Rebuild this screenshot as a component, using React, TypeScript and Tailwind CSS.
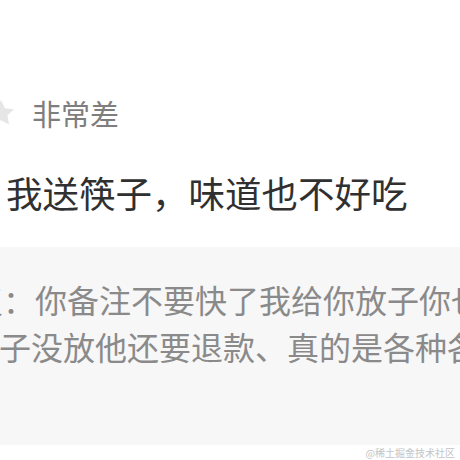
const cjk = { fontFamily: '"Noto Sans CJK SC", "Noto Sans", sans-serif' };

function Star() {
  return (
    <svg width="32" height="32" viewBox="0 0 24 24" className="shrink-0">
      <path
        d="M12 2.2l2.95 6.2 6.8.85-4.98 4.7 1.25 6.75L12 17.4l-6.02 3.3 1.25-6.75-4.98-4.7 6.8-.85z"
        fill="#e6e6e6"
      />
    </svg>
  );
}

export default function App() {
  return (
    <div className="relative h-[460px] w-[460px] overflow-hidden bg-white" style={cjk}>
      <div className="pt-[97px]">
        <div className="flex items-center">
          <div className="-ml-[15px] w-[32px]">
            <Star />
          </div>
          <span className="ml-[15px] text-[29px] leading-[29px] text-[#7e7e7e]">非常差</span>
        </div>

        <p className="mt-[46px] ml-[6px] whitespace-nowrap text-[36.5px] leading-[36px] text-[#303030]">
          我送筷子，味道也不好吃
        </p>
      </div>

      <div className="mt-[36px] h-[198px] overflow-hidden bg-[#f7f7f7] pt-[29px]">
        <p className="-ml-[125px] whitespace-nowrap text-[32px] leading-[47px] text-[#8a8a8a]">
          商家回复：你备注不要快了我给你放子你也不看
        </p>
        <p className="-ml-[1px] whitespace-nowrap text-[32px] leading-[47px] text-[#8a8a8a]">
          子没放他还要退款、真的是各种各样
        </p>
      </div>

      <div className="mt-[3px] flex justify-end pr-[5px]">
        <span className="text-[10px] leading-[10px] text-[#c4c4c4]">@稀土掘金技术社区</span>
      </div>
    </div>
  );
}
